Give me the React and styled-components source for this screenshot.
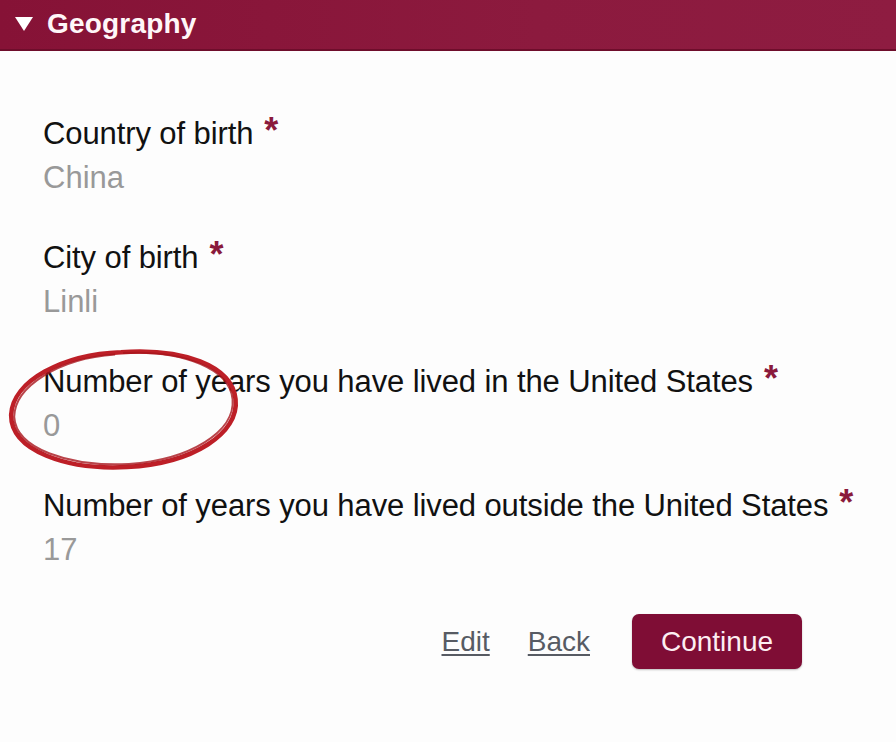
import React from 'react';
import styled, { createGlobalStyle } from 'styled-components';

const GlobalStyle = createGlobalStyle`
  html, body {
    margin: 0;
    padding: 0;
    background: #fdfdfd;
  }
  body {
    font-family: "Liberation Sans", Arial, sans-serif;
  }
`;

const fields = [
  { label: 'Country of birth', value: 'China' },
  { label: 'City of birth', value: 'Linli' },
  { label: 'Number of years you have lived in the United States', value: '0' },
  { label: 'Number of years you have lived outside the United States', value: '17' },
];

const App = () => {
  return (
    <Page>
      <GlobalStyle />
      <Header>
        <svg width="20" height="16" viewBox="0 0 20 16">
          <polygon points="1,1 19,1 10,15" fill="#fff" />
        </svg>
        <Title>Geography</Title>
      </Header>
      <Body>
        {fields.map((f) => (
          <Field key={f.label}>
            <Label>
              {f.label}
              <Required>*</Required>
            </Label>
            <Value>{f.value}</Value>
          </Field>
        ))}
        <Actions>
          <LinkButton href="#">Edit</LinkButton>
          <LinkButton href="#">Back</LinkButton>
          <Continue type="button">Continue</Continue>
        </Actions>
        {/* hand drawn mark around the "0 years" answer */}
        <Circle viewBox="0 0 240 126" width="240" height="126">
          <path
            d="M118 5 C 60 4, 8 28, 5 62 C 3 98, 58 120, 118 120 C 185 120, 232 92, 230 58 C 228 24, 180 4, 118 5 Z"
            fill="none"
            stroke="#bd1f27"
            strokeWidth="4.5"
          />
          <path
            d="M112 7 C 55 8, 10 34, 8 64 C 8 96, 60 117, 120 117 C 182 116, 228 90, 227 58 C 226 28, 182 6, 120 6"
            fill="none"
            stroke="#a8151d"
            strokeWidth="2"
            opacity="0.8"
          />
        </Circle>
      </Body>
    </Page>
  );
};

const Page = styled.div`
  width: 896px;
  height: 742px;
  position: relative;
  overflow: hidden;
  background: #fdfdfd;
`;

const Header = styled.div`
  height: 51px;
  display: flex;
  align-items: center;
  gap: 13px;
  padding-left: 14px;
  padding-bottom: 2px;
  box-sizing: border-box;
  background: linear-gradient(90deg, #861236 0%, #8c1a3e 60%, #8e1c41 100%);
  border-bottom: 2px solid #6e0d2b;
`;

const Title = styled.span`
  color: #fff6f8;
  font-size: 28px;
  font-weight: bold;
  letter-spacing: 0.2px;
`;

const Body = styled.div`
  position: relative;
  padding: 61px 94px 0 43px;
`;

const Field = styled.div`
  margin-bottom: 36px;
`;

const Label = styled.div`
  font-size: 31px;
  line-height: 44px;
  height: 44px;
  color: #111;
  letter-spacing: -0.1px;
  white-space: nowrap;
`;

const Required = styled.span`
  color: #8a1a3c;
  font-size: 36px;
  line-height: 0;
  font-weight: bold;
  margin-left: 11px;
  position: relative;
  top: -1px;
`;

const Value = styled.div`
  font-size: 31px;
  line-height: 44px;
  color: #999;
`;

const Actions = styled.div`
  display: flex;
  justify-content: flex-end;
  align-items: center;
  margin-top: 42px;
`;

const LinkButton = styled.a`
  font-size: 28px;
  color: #575b63;
  text-decoration: underline;
  text-underline-offset: 3px;
  margin-right: 38px;
  & + & {
    margin-right: 42px;
  }
`;

const Continue = styled.button`
  width: 170px;
  height: 55px;
  border: none;
  border-radius: 7px;
  background: #7f0d35;
  color: #fdeef2;
  font-family: "Liberation Sans", Arial, sans-serif;
  font-size: 28px;
  box-shadow: 0 1px 2px rgba(0, 0, 0, 0.25);
`;

const Circle = styled.svg`
  position: absolute;
  left: 6px;
  top: 296px;
  pointer-events: none;
  transform: rotate(-3deg);
`;

export default App;
